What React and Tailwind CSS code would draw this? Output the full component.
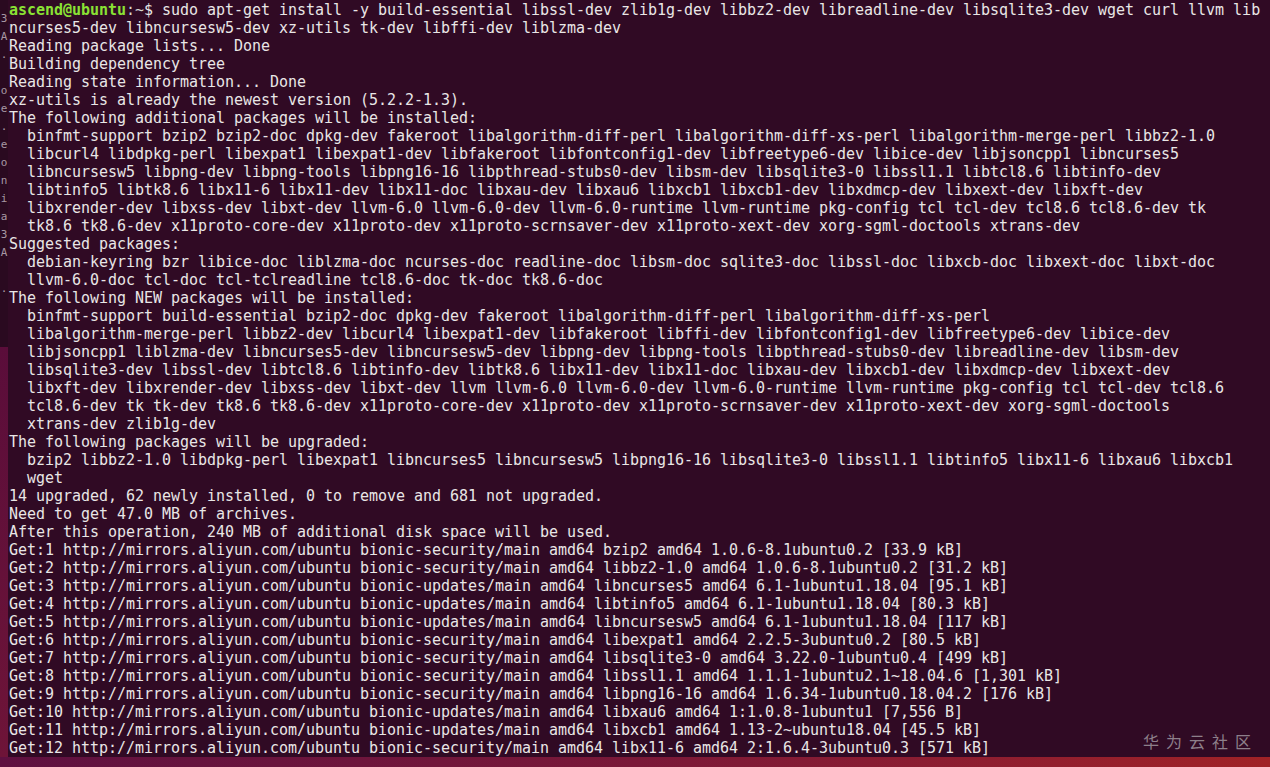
import React from 'react';

const lines = [
  'ncurses5-dev libncursesw5-dev xz-utils tk-dev libffi-dev liblzma-dev',
  'Reading package lists... Done',
  'Building dependency tree',
  'Reading state information... Done',
  'xz-utils is already the newest version (5.2.2-1.3).',
  'The following additional packages will be installed:',
  '  binfmt-support bzip2 bzip2-doc dpkg-dev fakeroot libalgorithm-diff-perl libalgorithm-diff-xs-perl libalgorithm-merge-perl libbz2-1.0',
  '  libcurl4 libdpkg-perl libexpat1 libexpat1-dev libfakeroot libfontconfig1-dev libfreetype6-dev libice-dev libjsoncpp1 libncurses5',
  '  libncursesw5 libpng-dev libpng-tools libpng16-16 libpthread-stubs0-dev libsm-dev libsqlite3-0 libssl1.1 libtcl8.6 libtinfo-dev',
  '  libtinfo5 libtk8.6 libx11-6 libx11-dev libx11-doc libxau-dev libxau6 libxcb1 libxcb1-dev libxdmcp-dev libxext-dev libxft-dev',
  '  libxrender-dev libxss-dev libxt-dev llvm-6.0 llvm-6.0-dev llvm-6.0-runtime llvm-runtime pkg-config tcl tcl-dev tcl8.6 tcl8.6-dev tk',
  '  tk8.6 tk8.6-dev x11proto-core-dev x11proto-dev x11proto-scrnsaver-dev x11proto-xext-dev xorg-sgml-doctools xtrans-dev',
  'Suggested packages:',
  '  debian-keyring bzr libice-doc liblzma-doc ncurses-doc readline-doc libsm-doc sqlite3-doc libssl-doc libxcb-doc libxext-doc libxt-doc',
  '  llvm-6.0-doc tcl-doc tcl-tclreadline tcl8.6-doc tk-doc tk8.6-doc',
  'The following NEW packages will be installed:',
  '  binfmt-support build-essential bzip2-doc dpkg-dev fakeroot libalgorithm-diff-perl libalgorithm-diff-xs-perl',
  '  libalgorithm-merge-perl libbz2-dev libcurl4 libexpat1-dev libfakeroot libffi-dev libfontconfig1-dev libfreetype6-dev libice-dev',
  '  libjsoncpp1 liblzma-dev libncurses5-dev libncursesw5-dev libpng-dev libpng-tools libpthread-stubs0-dev libreadline-dev libsm-dev',
  '  libsqlite3-dev libssl-dev libtcl8.6 libtinfo-dev libtk8.6 libx11-dev libx11-doc libxau-dev libxcb1-dev libxdmcp-dev libxext-dev',
  '  libxft-dev libxrender-dev libxss-dev libxt-dev llvm llvm-6.0 llvm-6.0-dev llvm-6.0-runtime llvm-runtime pkg-config tcl tcl-dev tcl8.6',
  '  tcl8.6-dev tk tk-dev tk8.6 tk8.6-dev x11proto-core-dev x11proto-dev x11proto-scrnsaver-dev x11proto-xext-dev xorg-sgml-doctools',
  '  xtrans-dev zlib1g-dev',
  'The following packages will be upgraded:',
  '  bzip2 libbz2-1.0 libdpkg-perl libexpat1 libncurses5 libncursesw5 libpng16-16 libsqlite3-0 libssl1.1 libtinfo5 libx11-6 libxau6 libxcb1',
  '  wget',
  '14 upgraded, 62 newly installed, 0 to remove and 681 not upgraded.',
  'Need to get 47.0 MB of archives.',
  'After this operation, 240 MB of additional disk space will be used.',
  'Get:1 http://mirrors.aliyun.com/ubuntu bionic-security/main amd64 bzip2 amd64 1.0.6-8.1ubuntu0.2 [33.9 kB]',
  'Get:2 http://mirrors.aliyun.com/ubuntu bionic-security/main amd64 libbz2-1.0 amd64 1.0.6-8.1ubuntu0.2 [31.2 kB]',
  'Get:3 http://mirrors.aliyun.com/ubuntu bionic-updates/main amd64 libncurses5 amd64 6.1-1ubuntu1.18.04 [95.1 kB]',
  'Get:4 http://mirrors.aliyun.com/ubuntu bionic-updates/main amd64 libtinfo5 amd64 6.1-1ubuntu1.18.04 [80.3 kB]',
  'Get:5 http://mirrors.aliyun.com/ubuntu bionic-updates/main amd64 libncursesw5 amd64 6.1-1ubuntu1.18.04 [117 kB]',
  'Get:6 http://mirrors.aliyun.com/ubuntu bionic-security/main amd64 libexpat1 amd64 2.2.5-3ubuntu0.2 [80.5 kB]',
  'Get:7 http://mirrors.aliyun.com/ubuntu bionic-security/main amd64 libsqlite3-0 amd64 3.22.0-1ubuntu0.4 [499 kB]',
  'Get:8 http://mirrors.aliyun.com/ubuntu bionic-security/main amd64 libssl1.1 amd64 1.1.1-1ubuntu2.1~18.04.6 [1,301 kB]',
  'Get:9 http://mirrors.aliyun.com/ubuntu bionic-security/main amd64 libpng16-16 amd64 1.6.34-1ubuntu0.18.04.2 [176 kB]',
  'Get:10 http://mirrors.aliyun.com/ubuntu bionic-updates/main amd64 libxau6 amd64 1:1.0.8-1ubuntu1 [7,556 B]',
  'Get:11 http://mirrors.aliyun.com/ubuntu bionic-updates/main amd64 libxcb1 amd64 1.13-2~ubuntu18.04 [45.5 kB]',
  'Get:12 http://mirrors.aliyun.com/ubuntu bionic-security/main amd64 libx11-6 amd64 2:1.6.4-3ubuntu0.3 [571 kB]',
];

// bits of the window behind the terminal at the left edge
const behind = ['3', 'A', '.', '', 'o', 'e', '.', 'e', 'o', 'n', 'i', 'a', '3', 'A', '', '.', ''];

export default function App() {
  return (
    <div className="w-[1270px] h-[767px] overflow-hidden flex flex-col bg-[#5c0f3a] font-['DejaVu_Sans_Mono',monospace]">
      <div className="flex flex-1 min-h-0">
        {/* left edge: other window + desktop */}
        <div className="w-[8px] shrink-0 flex flex-col">
          <div className="h-[347px] bg-[#2a0a20] pt-[10px] flex flex-col items-center">
            {behind.map((b, i) => (
              <div key={i} className="h-[18px] leading-[18px] text-[11px] text-[#a898a4] whitespace-pre">
                {b}
              </div>
            ))}
          </div>
          <div className="flex-1 bg-gradient-to-b from-[#5a0d3a] to-[#6e1438]" />
        </div>

        {/* terminal */}
        <div className="relative flex-1 bg-[#300a24] pt-[1px] pl-[1px] overflow-hidden text-[15px] leading-[18px] tracking-[-0.03px] text-[#e9e6e6] whitespace-pre">
          <div>
            <span className="text-[#8ae234] font-bold">ascend@ubuntu</span>
            <span className="text-[#d3d7cf]">:~</span>
            <span>$ sudo apt-get install -y build-essential libssl-dev zlib1g-dev libbz2-dev libreadline-dev libsqlite3-dev wget curl llvm lib</span>
          </div>
          {lines.map((l, i) => (
            <div key={i}>{l}</div>
          ))}

          <div className="absolute right-[12px] bottom-[6px] text-[16px] leading-[20px] tracking-[7px] text-[#8d7f8a] font-['Noto_Sans_CJK_SC',sans-serif]">
            华为云社区
          </div>
        </div>
      </div>
      <div className="h-[10px] shrink-0 bg-gradient-to-r from-[#5e1040] via-[#7a1838] to-[#a02226]" />
    </div>
  );
}
